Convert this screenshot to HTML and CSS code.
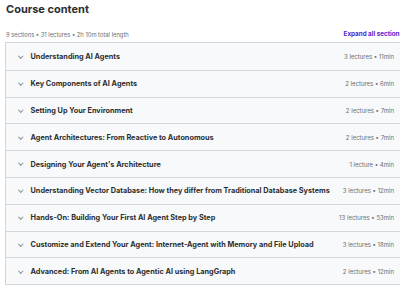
FILE: index.html
```html
<!DOCTYPE html>
<html lang="en">

<head>
    <meta charset="UTF-8">
    <title>Course content</title>
    <link rel="stylesheet" href="styles.css">
</head>

<body>
    <div class="page">
        <h2 class="title">Course content</h2>
        <div class="bar">
            <span class="summary">9 sections • 31 lectures • 2h 10m total length</span>
            <span class="expand">Expand all sections</span>
        </div>
        <ul class="sections">
            <li><span class="chev"></span><span class="name">Understanding AI Agents</span><span class="meta">3 lectures • 11min</span></li>
            <li><span class="chev"></span><span class="name">Key Components of AI Agents</span><span class="meta">2 lectures • 6min</span></li>
            <li><span class="chev"></span><span class="name">Setting Up Your Environment</span><span class="meta">2 lectures • 7min</span></li>
            <li><span class="chev"></span><span class="name">Agent Architectures: From Reactive to Autonomous</span><span class="meta">2 lectures • 7min</span></li>
            <li><span class="chev"></span><span class="name">Designing Your Agent's Architecture</span><span class="meta">1 lecture • 4min</span></li>
            <li><span class="chev"></span><span class="name">Understanding Vector Database: How they differ from Traditional Database Systems</span><span class="meta">3 lectures • 12min</span></li>
            <li><span class="chev"></span><span class="name">Hands-On: Building Your First AI Agent Step by Step</span><span class="meta">13 lectures • 53min</span></li>
            <li><span class="chev"></span><span class="name">Customize and Extend Your Agent: Internet-Agent with Memory and File Upload</span><span class="meta">3 lectures • 18min</span></li>
            <li><span class="chev"></span><span class="name">Advanced: From AI Agents to Agentic AI using LangGraph</span><span class="meta">2 lectures • 12min</span></li>
        </ul>
    </div>
</body>

</html>
```
FILE: styles.css
```css
html, body {
    margin: 0;
    padding: 0;
    overflow: hidden;
    background: #fff;
}

.page {
    width: 398px;
    padding: 0 0 0 5px;
    font-family: Inter, "Noto Sans", sans-serif;
    color: #2d2f31;
}

.title {
    margin: 0;
    padding: 2px 0 0 1px;
    font-size: 11px;
    line-height: 14px;
    font-weight: 700;
}

.bar {
    display: flex;
    justify-content: space-between;
    align-items: center;
    height: 14px;
    margin-top: 11px;
    padding-left: 1px;
}

.summary {
    font-size: 5.8px;
    color: #6a6f73;
}

.expand {
    font-size: 6.3px;
    font-weight: 700;
    color: #5624d0;
}

.sections {
    list-style: none;
    margin: 1px 0 0;
    padding: 0;
    border: 1px solid #d1d7dc;
}

.sections li {
    display: flex;
    align-items: center;
    height: 26.8px;
    padding: 0 8px 0 12px;
    background: #f7f9fa;
    border-top: 1px solid #d1d7dc;
    box-sizing: border-box;
}

.sections li:first-child {
    border-top: none;
}

.chev {
    width: 2.5px;
    height: 2.5px;
    margin: -2px 8px 0 1px;
    border-right: 1px solid #8a8f93;
    border-bottom: 1px solid #8a8f93;
    transform: rotate(45deg);
}

.name {
    flex: 1;
    font-size: 7.3px;
    font-weight: 700;
    white-space: nowrap;
}

.meta {
    font-size: 6px;
    color: #6a6f73;
    white-space: nowrap;
}
```
